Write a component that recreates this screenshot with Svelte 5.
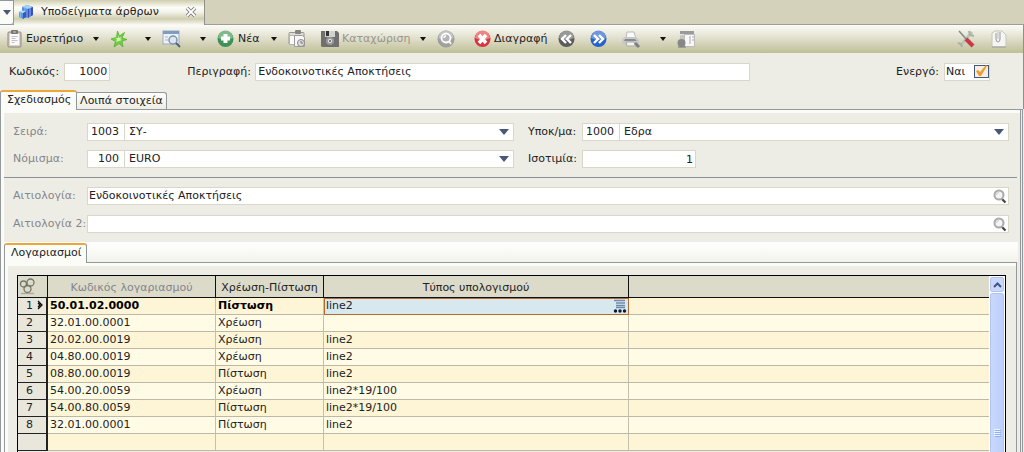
<script>
	let code = $state('1000');
	let description = $state('Ενδοκοινοτικές Αποκτήσεις');
	let active = $state(true);
	let reason = $state('Ενδοκοινοτικές Αποκτήσεις');
	let reason2 = $state('');
	let rate = $state('1');

	const lines = [
		{ account: '50.01.02.0000', side: 'Πίστωση', formula: 'line2' },
		{ account: '32.01.00.0001', side: 'Χρέωση', formula: '' },
		{ account: '20.02.00.0019', side: 'Χρέωση', formula: 'line2' },
		{ account: '04.80.00.0019', side: 'Χρέωση', formula: 'line2' },
		{ account: '08.80.00.0019', side: 'Πίστωση', formula: 'line2' },
		{ account: '54.00.20.0059', side: 'Χρέωση', formula: 'line2*19/100' },
		{ account: '54.00.80.0059', side: 'Πίστωση', formula: 'line2*19/100' },
		{ account: '32.01.00.0001', side: 'Πίστωση', formula: 'line2' }
	];
</script>

{#snippet caret()}
	<button class="caret" aria-label="Επιλογές">
		<svg width="6" height="4" viewBox="0 0 6 4"><path d="M0 0h6L3 4z" fill="#111" /></svg>
	</button>
{/snippet}

{#snippet lens()}
	<button class="lens" aria-label="Αναζήτηση">
		<svg width="14" height="15" viewBox="0 0 14 15" fill="none">
			<circle cx="6" cy="6" r="4.500" fill="#f4f4f4" stroke="#a9a9a9" stroke-width="2" />
			<path d="M3.500 6a2.500 2.500 0 0 1 2.500-2.500" stroke="#ccc" />
			<path d="M8.500 10l1.500 1" stroke="#999" stroke-width="1.500" />
			<path d="M9.500 10.500l3 3" stroke="#444" stroke-width="2.200" />
		</svg>
	</button>
{/snippet}

{#snippet combo(id, number, text)}
	<div class="combo">
		<input class="num" value={number} aria-label="Κωδικός" />
		<select {id}>
			<option>{text}</option>
		</select>
		<svg width="10" height="6" viewBox="0 0 10 6"><path d="M0 0h10L5 6z" fill="#4a5878" /></svg>
	</div>
{/snippet}

<main class="window">
	<div class="doc-tabs">
		<button class="doc-list" aria-label="Λίστα καρτελών">
			<svg width="8" height="5" viewBox="0 0 8 5"><path d="M0 0h8L4 5z" fill="#4a5878" /></svg>
		</button>
		<div class="doc-tab">
			<svg width="16" height="16" viewBox="0 0 16 16">
				<path d="M4 3l5-2 6 2v8l-6 3-5-2z" fill="#4f8fe0" />
				<path d="M4 3l5-2 6 2-5 2z" fill="#a5d2f5" />
				<path d="M10 5l5-2v8l-5 3z" fill="#3a50bd" />
				<path d="M1 8l3-1.500 4 1v5.500L5 15l-4-2z" fill="#4aa3dc" />
				<path d="M1 8l3-1.500 4 1L5 9z" fill="#b9e3f5" />
				<path d="M5 9l3-1.500V13l-3 2z" fill="#5548b8" />
				<path d="M7 3v4M12 4v9M2.500 9v4" stroke="#8bbcf0" />
			</svg>
			<span>Υποδείγματα άρθρων</span>
			<button class="close" aria-label="Κλείσιμο">
				<svg width="12" height="12" viewBox="0 0 12 12">
					<path d="M2 2l8 8M10 2l-8 8" stroke="#777" stroke-width="3.600" />
					<path d="M2 2l8 8M10 2l-8 8" stroke="#fff" stroke-width="1.800" />
				</svg>
			</button>
		</div>
	</div>

	<div class="toolbar">
		<div class="split list">
			<button class="tool">
				<svg width="15" height="18" viewBox="0 0 15 18">
					<rect x="1" y="2" width="13" height="15" rx="1" fill="#d8d2c8" stroke="#8c857c" />
					<rect x="3" y="4" width="9" height="11" fill="#fafafa" />
					<rect x="4" y="0" width="7" height="4" rx="1" fill="#777" />
					<path d="M4.500 6.500h6M4.500 8.500h4M4.500 10.500h6M4.500 12.500h3" stroke="#c4bfc0" />
					<path d="M6 2h3" stroke="#ccc" />
				</svg>
				<span>Ευρετήριο</span>
			</button>
			{@render caret()}
		</div>
		<div class="split star">
			<button class="tool" aria-label="Αγαπημένα">
				<svg width="18" height="18" viewBox="0 0 18 18">
					<path d="M7.500 1l2 5 5-3.500-2.500 5.500 5 1.500-5 1.500 1 6-4-3.500-5 3.500 1.500-5.500-4.500-2.500 5.500-1.500z" fill="#6fcf45" stroke="#55ad35" stroke-width=".8" />
					<path d="M8 5l1 3 3-1-2 2 2 1-3 1-3 1 1-3-2-1h3z" fill="#d5f7ae" />
				</svg>
			</button>
			{@render caret()}
		</div>
		<div class="split find">
			<button class="tool" aria-label="Προβολή">
				<svg width="20" height="18" viewBox="0 0 20 18">
					<rect x="1" y="1" width="16" height="13" fill="#eef2f7" stroke="#9aabc2" />
					<rect x="1" y="1" width="16" height="3" fill="#7e9bc4" />
					<path d="M3 7h3M3 10h3" stroke="#a9b5c8" />
					<circle cx="11" cy="10" r="4" fill="#d9e7f5" stroke="#8493a8" stroke-width="1.500" />
					<path d="M14 13l4 4" stroke="#576375" stroke-width="2" />
				</svg>
			</button>
			{@render caret()}
		</div>
		<div class="split new">
			<button class="tool">
				<svg width="17" height="18" viewBox="0 0 17 18">
					<circle cx="8.500" cy="9" r="8" fill="#3f9154" />
					<path d="M1 8a7.500 7.500 0 0 1 15 0q-7 4-15 0" fill="#7fba8b" />
					<path d="M8.500 4v9M4 8.500h9" stroke="#fff" stroke-width="4" />
				</svg>
				<span>Νέα</span>
			</button>
			{@render caret()}
		</div>
		<button class="tool copy" aria-label="Αντιγραφή">
			<svg width="18" height="18" viewBox="0 0 18 18">
				<rect x="1" y="2.500" width="15" height="12" rx="1" fill="#deded6" stroke="#96968e" />
				<rect x="7" y="0" width="6" height="4" rx="1" fill="#85857f" />
				<path d="M1.500 5.500h5v9h-5z" fill="#fafafa" stroke="#b5b5b0" />
				<path d="M6.500 5.500h8l2 2v9h-10z" fill="#f6f6f6" stroke="#9b9b9b" />
				<circle cx="13" cy="13" r="3.500" fill="#ddd" stroke="#8b8b8b" />
				<path d="M13 11v2h2" stroke="#777" fill="none" />
			</svg>
		</button>
		<div class="split save">
			<button class="tool" disabled>
				<svg width="18" height="18" viewBox="0 0 18 18">
					<path d="M0 1h16l2 2v14H1l-1-1z" fill="#707070" />
					<rect x="4" y="1" width="10" height="6" fill="#d2d2d2" />
					<rect x="5" y="1" width="3" height="5" fill="#333" />
					<circle cx="9" cy="11" r="4" fill="#999" />
					<circle cx="9" cy="11" r="2" fill="#eee" />
					<circle cx="9" cy="11" r="1" fill="#555" />
				</svg>
				<span>Καταχώριση</span>
			</button>
			{@render caret()}
		</div>
		<button class="tool preview" aria-label="Προεπισκόπηση">
			<svg width="18" height="18" viewBox="0 0 18 18">
				<circle cx="9" cy="9" r="8" fill="#a2a2a2" stroke="#999" />
				<path d="M1.500 8a7.500 7.500 0 0 1 15 0q-7 4-15 0" fill="#c2c2c2" />
				<circle cx="9" cy="8" r="4.500" fill="#b4b4b4" stroke="#fff" stroke-width="1.800" />
				<path d="M7 8a2 2 0 0 1 2-2M12 11l2 3" fill="none" stroke="#f8f8f8" stroke-width="1.800" />
			</svg>
		</button>
		<button class="tool remove">
			<svg width="17" height="18" viewBox="0 0 17 18">
				<circle cx="8.500" cy="9" r="8" fill="#d93540" />
				<path d="M1 8a7.500 7.500 0 0 1 15 0q-7 4-15 0" fill="#ee8585" />
				<path d="M5 5l7 8M12 5l-7 8" stroke="#fff" stroke-width="3.500" />
			</svg>
			<span>Διαγραφή</span>
		</button>
		<button class="tool step" aria-label="Προηγούμενο">
			<svg width="17" height="18" viewBox="0 0 17 18">
				<circle cx="8.500" cy="9" r="8" fill="#5c5c5c" />
				<path d="M1 8a7.500 7.500 0 0 1 15 0q-7 4-15 0" fill="#989898" />
				<path d="M8 5L4 9l4 4M13 5L9 9l4 4" stroke="#fff" stroke-width="2.400" fill="none" />
			</svg>
		</button>
		<button class="tool step" aria-label="Επόμενο">
			<svg width="17" height="18" viewBox="0 0 17 18">
				<circle cx="8.500" cy="9" r="8" fill="#2463cc" />
				<path d="M1 8a7.500 7.500 0 0 1 15 0q-7 4-15 0" fill="#7097dc" />
				<path d="M4 5l4 4-4 4M9 5l4 4-4 4" stroke="#fff" stroke-width="2.400" fill="none" />
			</svg>
		</button>
		<div class="split print">
			<button class="tool" aria-label="Εκτύπωση">
				<svg width="19" height="18" viewBox="0 0 19 18">
					<path d="M5 2h7l2 7H4z" fill="#fafafa" stroke="#bbb" />
					<path d="M0 9l3-2h11l3 3v4l-3 1H2l-2-2z" fill="#c8c8c8" />
					<path d="M3 9h10l2 2H2z" fill="#8a8a8a" />
					<path d="M4 12h8l2 4H5z" fill="#f2f2f2" stroke="#aaa" />
					<path d="M13 13l4 4" stroke="#808080" stroke-width="3" />
				</svg>
			</button>
			{@render caret()}
		</div>
		<button class="tool" aria-label="Αναφορά">
			<svg width="19" height="18" viewBox="0 0 19 18">
				<rect x="3" y="1" width="14" height="3" fill="#9a9a9a" />
				<rect x="7.500" y="4.500" width="10" height="12" fill="#f8f8f8" stroke="#bbb" />
				<path d="M3 6h4M3 8h4M13 6v8M15 7h2M15 10h2" stroke="#aaa" />
				<circle cx="4.500" cy="13" r="4" fill="#888" />
				<path d="M1 17h8" stroke="#777" />
			</svg>
		</button>
		<div class="tool-end">
			<button class="tool" aria-label="Ρυθμίσεις">
				<svg width="18" height="18" viewBox="0 0 18 18">
					<path d="M15 2L4 15" stroke="#bcc5b8" stroke-width="3" />
					<path d="M12 1l1 4 4 1M1 13l3 1 1 3" stroke="#a7b2a5" stroke-width="2" fill="none" />
					<path d="M2 1l8 9" stroke="#8a8a8a" stroke-width="1.600" />
					<path d="M9 9l7 7" stroke="#cb3945" stroke-width="4" />
				</svg>
			</button>
			<button class="tool" aria-label="Συνημμένα">
				<svg width="16" height="18" viewBox="0 0 16 18">
					<path d="M1 3l3-2h7l4 4v12H1z" fill="#f5f5f3" stroke="#c5c5bc" />
					<path d="M1 17h14" stroke="#999" />
					<path d="M5 3v6q0 3 2 3t2-3V2" stroke="#999" fill="none" />
					<path d="M7 2v7" stroke="#bbb" />
				</svg>
			</button>
		</div>
	</div>

	<form class="header-form" onsubmit={(e) => e.preventDefault()}>
		<label for="code">Κωδικός:</label>
		<input id="code" class="field num code" bind:value={code} />
		<label for="description" class="description-label">Περιγραφή:</label>
		<input id="description" class="field description" bind:value={description} />
		<label for="active" class="active-label">Ενεργό:</label>
		<div class="field active-box">
			<span>{active ? 'Ναι' : 'Όχι'}</span>
			<span class="check">
				<input id="active" type="checkbox" bind:checked={active} />
				{#if active}
					<svg width="13" height="12" viewBox="0 0 13 12">
						<path d="M1 6l2-1 2 2 6-7 1 1-6 10H4z" fill="#f39a2d" />
					</svg>
				{/if}
			</span>
		</div>
	</form>

	<div class="tabs">
		<button class="tab selected">Σχεδιασμός</button>
		<button class="tab">Λοιπά στοιχεία</button>
	</div>

	<section class="panel">
		<div class="design">
			<label for="series" class="muted">Σειρά:</label>
			{@render combo('series', '1003', 'ΣΥ-')}
			<label for="branch" class="second">Υποκ/μα:</label>
			{@render combo('branch', '1000', 'Εδρα')}
			<label for="currency" class="muted">Νόμισμα:</label>
			{@render combo('currency', '100', 'EURO')}
			<label for="rate" class="second">Ισοτιμία:</label>
			<input id="rate" class="field num rate" bind:value={rate} />
		</div>
		<div class="reasons">
			<label for="reason" class="muted">Αιτιολογία:</label>
			<div class="field search">
				<input id="reason" bind:value={reason} />
				{@render lens()}
			</div>
			<label for="reason2" class="muted">Αιτιολογία 2:</label>
			<div class="field search">
				<input id="reason2" bind:value={reason2} />
				{@render lens()}
			</div>
		</div>

		<div class="tabs inner">
			<button class="tab selected">Λογαριασμοί</button>
		</div>
		<div class="accounts">
			<div class="grid">
				<table>
					<colgroup>
						<col class="c-row" />
						<col class="c-account" />
						<col class="c-side" />
						<col class="c-formula" />
						<col />
					</colgroup>
					<thead>
						<tr>
							<th class="corner">
								<svg width="17" height="17" viewBox="0 0 17 17" fill="none" stroke="#77776c" stroke-width="1.300">
									<circle cx="4.500" cy="6" r="3" />
									<circle cx="11.500" cy="4.500" r="3.500" />
									<circle cx="8.500" cy="11" r="3.500" />
									<path d="M2 15.500h13" stroke="#aaa99a" />
								</svg>
							</th>
							<th class="muted">Κωδικός λογαριασμού</th>
							<th>Χρέωση-Πίστωση</th>
							<th>Τύπος υπολογισμού</th>
							<th></th>
						</tr>
					</thead>
					<tbody>
						{#each lines as line, i}
							<tr class:current={i === 0}>
								<th scope="row">
									<span class="row-no">{i + 1}</span>
									{#if i === 0}
										<svg width="6" height="10" viewBox="0 0 6 10" fill="none" stroke="#111">
											<path d="M1 1l4 4-4 4M1 3l2 2-2 2" stroke-width="1.300" />
										</svg>
									{/if}
								</th>
								<td>{line.account}</td>
								<td>{line.side}</td>
								<td class:editing={i === 0}>
									{line.formula}
									{#if i === 0}
										<button class="lookup" aria-label="Επιλογή τύπου">
											<svg width="14" height="14" viewBox="0 0 14 14">
												<path d="M1 1.500h11M3 4h9M3 6.500h9M3 8.500h9" stroke="#6e8cab" stroke-width="1.500" />
												<circle cx="2.500" cy="12" r="1.700" fill="#10182c" />
												<circle cx="7" cy="12" r="1.700" fill="#10182c" />
												<circle cx="11.500" cy="12" r="1.700" fill="#10182c" />
											</svg>
										</button>
									{/if}
								</td>
								<td></td>
							</tr>
						{/each}
						<tr class="blank">
							<th></th>
							<td></td>
							<td></td>
							<td></td>
							<td></td>
						</tr>
					</tbody>
				</table>
				<div class="scrollbar">
					<button class="scroll-up" aria-label="Πάνω">
						<svg width="9" height="6" viewBox="0 0 9 6"><path d="M1 5l3.500-3.500L8 5" fill="none" stroke="#3f5687" stroke-width="2" /></svg>
					</button>
					<div class="thumb">
						<svg width="7" height="8" viewBox="0 0 7 8"><path d="M0 .5h6M0 2.500h6M0 4.500h6M0 6.500h6" stroke="#eef4fe" /><path d="M1 1.500h6M1 3.500h6M1 5.500h6M1 7.500h6" stroke="#8cb0f8" /></svg>
					</div>
				</div>
			</div>
		</div>
	</section>
</main>

<style>
	:global(body) {
		margin: 0;
	}
	.window {
		display: flex;
		flex-direction: column;
		height: 100vh;
		overflow: hidden;
		box-sizing: border-box;
		background: #eeede5;
		color: #222;
		font-family: 'DejaVu Sans', Verdana, sans-serif;
		font-size: 11px;
		line-height: 14px;
	}
	.window * {
		box-sizing: border-box;
	}
	button,
	input,
	select {
		margin: 0;
		padding: 0;
		border: 0;
		background: none;
		color: inherit;
		font: inherit;
	}
	svg {
		display: block;
		flex: none;
	}
	.muted {
		color: #85858c;
	}

	/* document tabs */
	.doc-tabs {
		display: flex;
		flex: none;
		height: 25px;
		background: #d4d2ba;
		border-bottom: 1px solid #9c9d98;
	}
	.doc-list {
		display: flex;
		align-items: center;
		justify-content: center;
		width: 14px;
		height: 25px;
		background: #fbfbf8;
		border: 1px solid #8e98a4;
		border-left: 0;
		border-radius: 0 0 3px 0;
	}
	.doc-tab {
		display: flex;
		align-items: center;
		width: 191px;
		height: 25px;
		padding: 0 7px 2px 4px;
		border-right: 1px solid #8f908a;
		background: linear-gradient(#cfcdae, #fdfdf8 30%, #f2f1e8 50%, #d0ceaf 75%, #fafaf4);
	}
	.doc-tab span {
		margin-left: 7px;
	}
	.close {
		margin-left: auto;
	}

	/* toolbar */
	.toolbar {
		display: flex;
		flex: none;
		align-items: center;
		gap: 11px;
		height: 28px;
		padding: 0 16px 0 7px;
		border-right: 1px solid #8f908a;
		background: linear-gradient(#fcfcf8, #e8e7d8 35%, #cfceb0 75%, #bfbe97);
	}
	.tool {
		display: flex;
		align-items: center;
		gap: 4px;
	}
	.tool:disabled {
		color: #96958a;
	}
	.split {
		display: flex;
		align-items: center;
		justify-content: space-between;
	}
	.split.list {
		width: 92px;
	}
	.split.star {
		width: 41px;
	}
	.split.find,
	.split.print {
		width: 44px;
	}
	.split.new {
		width: 60px;
	}
	.split.save {
		width: 105px;
	}
	.save .tool,
	.remove {
		gap: 3px;
	}
	.copy,
	.step {
		margin-right: 4px;
	}
	.preview {
		margin-right: 8px;
	}
	.tool-end {
		display: flex;
		gap: 16px;
		margin-left: auto;
	}

	/* fields */
	.field,
	.combo {
		height: 18px;
		background: #fff;
		border: 1px solid #d9d8c8;
	}
	.field {
		padding: 0 2px;
	}
	.num {
		text-align: right;
	}
	.header-form {
		display: flex;
		flex: none;
		align-items: center;
		height: 36px;
		padding: 1px 33px 0 9px;
		border-right: 1px solid #8f908a;
	}
	.code {
		width: 46px;
		margin-left: 5px;
	}
	.description-label {
		width: 68px;
		margin-left: 77px;
	}
	.description {
		flex: 0 1 495px;
		min-width: 100px;
	}
	.active-label {
		margin-left: auto;
	}
	.active-box {
		display: flex;
		align-items: center;
		justify-content: space-between;
		width: 46px;
		margin-left: 5px;
		padding: 0 0 0 1px;
	}
	.check {
		position: relative;
	}
	.check input {
		display: block;
		appearance: none;
		width: 15px;
		height: 13px;
		background: #f4efe2;
		border: 1px solid #44567a;
	}
	.check svg {
		position: absolute;
		top: 0;
		left: 1px;
		pointer-events: none;
	}

	/* tabs */
	.tabs {
		display: flex;
		flex: none;
		align-items: flex-end;
		height: 20px;
		border-right: 1px solid #8f908a;
	}
	.tab {
		height: 17px;
		padding: 0 3px;
		background: linear-gradient(#fdfdfb, #eeede5);
		border: 1px solid #93989a;
		border-bottom: 0;
		border-left: 0;
		border-radius: 0 3px 0 0;
		white-space: nowrap;
	}
	.tab.selected {
		position: relative;
		z-index: 1;
		height: 20px;
		margin-bottom: -1px;
		padding: 0 5px 2px 6px;
		background: #fbfbf8;
		border-left: 1px solid #93989a;
		border-top: 2px solid #eba83a;
		border-radius: 3px 3px 0 0;
	}

	/* design panel */
	.panel {
		display: flex;
		flex: 1;
		flex-direction: column;
		min-height: 0;
		margin-right: 1px;
		padding: 0 3px 0 2px;
		border: 1px solid #93989a;
		border-bottom: 0;
		border-right: 3px double #93989a;
		box-shadow: inset 3px 3px #fbfbf8;
	}
	.design,
	.reasons {
		display: grid;
		align-items: center;
		margin-left: 1px;
		padding: 13px 8px 9px 9px;
	}
	.design {
		grid-template-columns: 74px minmax(0, 1fr) 68px minmax(0, 1fr);
		row-gap: 9px;
		border-bottom: 1px solid #8b8f97;
	}
	.reasons {
		grid-template-columns: 74px minmax(0, 1fr);
		row-gap: 10px;
		padding-top: 9px;
	}
	.second {
		padding-left: 14px;
	}
	.combo {
		display: flex;
		position: relative;
	}
	.combo .num {
		width: 37px;
		padding-right: 5px;
		border-right: 1px solid #d9d8c8;
	}
	.combo select {
		flex: 1;
		min-width: 0;
		padding-left: 4px;
		appearance: none;
	}
	.combo svg {
		position: absolute;
		top: 5px;
		right: 4px;
		pointer-events: none;
	}
	.rate {
		width: 114px;
	}
	.search {
		display: flex;
		align-items: center;
		padding: 0 1px;
	}
	.search input {
		flex: 1;
		min-width: 0;
	}

	/* accounts grid */
	.tabs.inner {
		margin: 0 -1px 0 1px;
		border: 0;
		background: linear-gradient(#fff, #f3f3ed);
	}
	.accounts {
		display: flex;
		flex: 1;
		min-height: 0;
		margin-left: 1px;
		padding: 12px 10px 0 12px;
		border: 1px solid #93989a;
		border-bottom: 0;
		box-shadow: inset 3px 3px #fbfbf8;
	}
	.grid {
		display: flex;
		flex: 1;
		min-width: 0;
		overflow: hidden;
		border: 1px solid #000;
		border-bottom: 0;
	}
	table {
		flex: 1;
		width: 0;
		align-self: flex-start;
		table-layout: fixed;
		border-collapse: separate;
		border-spacing: 0;
	}
	.c-row {
		width: 30px;
	}
	.c-account {
		width: 168px;
	}
	.c-side {
		width: 108px;
	}
	.c-formula {
		width: 305px;
	}
	th {
		padding: 0;
		font-weight: normal;
	}
	thead th {
		height: 22px;
		padding-top: 2px;
		background: #dcdbca;
		border-right: 1px solid #111;
		border-bottom: 1px solid #111;
	}
	thead th:last-child {
		border-right: 0;
	}
	thead .corner {
		padding: 0 0 0 1px;
	}
	tbody th {
		height: 17px;
		background: #e9e7dc;
		border-right: 2px solid #222;
		border-bottom: 1px solid #222;
		text-align: left;
		white-space: nowrap;
	}
	.row-no {
		padding-left: 8px;
	}
	tbody th svg {
		display: inline-block;
		vertical-align: -1px;
	}
	td {
		position: relative;
		height: 17px;
		padding: 0 2px;
		background: #fffbe4;
		border-right: 1px solid #c3c0b0;
		border-bottom: 1px solid #bcb9ab;
		line-height: 14px;
		white-space: nowrap;
	}
	td:last-child {
		border-right: 0;
	}
	tbody tr:nth-child(odd) td {
		background: #fef5d6;
	}
	.current td {
		color: #000;
		font-weight: bold;
	}
	tbody tr.current .editing {
		background: #d8e8ef;
		font-weight: normal;
		color: #222;
		outline: 1px solid #b5682f;
		outline-offset: -1px;
	}
	.lookup {
		position: absolute;
		top: 1px;
		right: 1px;
	}
	.scrollbar {
		display: flex;
		flex-direction: column;
		width: 16px;
		padding: 1px;
		background: #fdfdfa;
	}
	.scroll-up {
		display: flex;
		flex: none;
		align-items: center;
		justify-content: center;
		height: 15px;
		background: #c8d7fb;
		border: 1px solid #b2c5f0;
		border-radius: 2px;
	}
	.thumb {
		display: flex;
		flex: none;
		align-items: center;
		justify-content: center;
		height: 280px;
		margin-top: 1px;
		background: linear-gradient(90deg, #c9d8fc, #bccffb);
		border: 1px solid #b2c5f0;
		border-radius: 2px;
	}
</style>
